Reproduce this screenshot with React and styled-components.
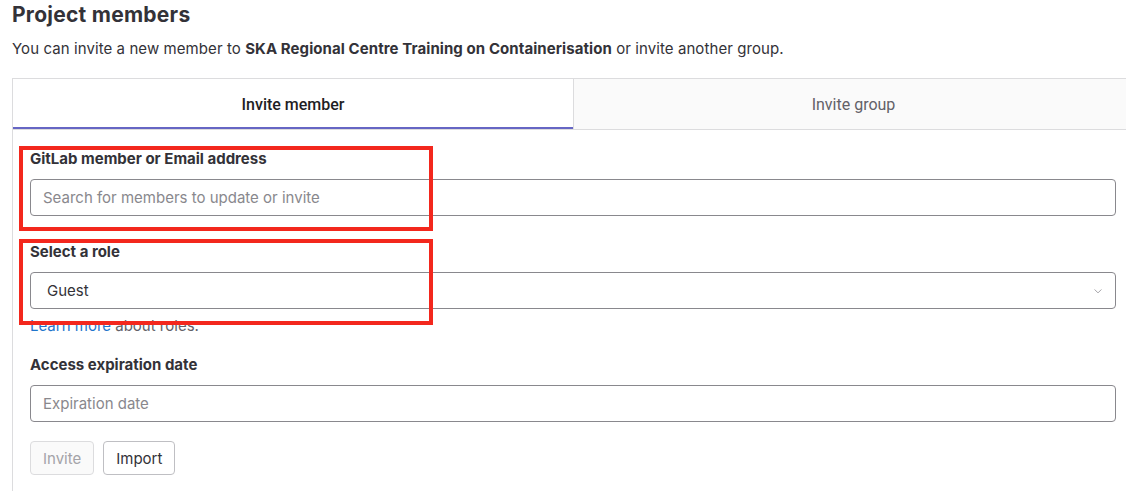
import React from 'react';
import styled, { createGlobalStyle } from 'styled-components';

const GlobalStyle = createGlobalStyle`
  body {
    margin: 0;
    background: #fff;
    color: #333238;
    font-family: Inter, "Noto Sans", sans-serif;
    overflow: hidden;
  }
`;

const Page = styled.div`
  padding: 0 0 0 12px;
  width: 1132px;
`;

const Title = styled.h1`
  margin: 0;
  padding-top: 2px;
  font-size: 21px;
  line-height: 26px;
  font-weight: 700;
  letter-spacing: 0.25px;
  color: #333238;
`;

const Intro = styled.p`
  margin: 11px 0 0;
  font-size: 15px;
  line-height: 20px;
  letter-spacing: 0.08px;
  color: #333238;
  strong {
    font-weight: 700;
  }
`;

const Panel = styled.div`
  margin-top: 19px;
  width: 1120px;
  border-left: 1px solid #dcdcde;
`;

const TabList = styled.div`
  display: grid;
  grid-template-columns: 560px 1fr;
  border-top: 1px solid #dcdcde;
  border-bottom: 1px solid #dcdcde;
`;

const Tab = styled.div`
  height: 50px;
  display: flex;
  align-items: center;
  justify-content: center;
  font-family: Roboto, "Noto Sans", sans-serif;
  font-size: 16px;
  font-weight: ${p => (p.$active ? 500 : 400)};
  color: ${p => (p.$active ? '#1f1e24' : '#626168')};
  background: ${p => (p.$active ? '#fff' : '#fafafa')};
  box-shadow: ${p => (p.$active ? 'inset 0 -2px 0 #6666c4' : 'none')};
  border-left: ${p => (p.$active ? 'none' : '1px solid #dcdcde')};
`;

const Body = styled.div`
  padding: 19px 17px 16px 17px;
`;

const Group = styled.div`
  position: relative;
  margin-bottom: ${p => p.$mb || 0}px;
`;

const Label = styled.label`
  display: block;
  font-size: 15px;
  line-height: 20px;
  font-weight: 700;
  color: #333238;
  margin-bottom: 10px;
`;

const Field = styled.div`
  position: relative;
  height: 37px;
  box-sizing: border-box;
  border: 1px solid #89888d;
  border-radius: 4px;
  display: flex;
  align-items: center;
  padding: 0 12px;
  font-size: 15px;
  color: ${p => (p.$placeholder ? '#89888d' : '#333238')};
  padding-left: ${p => (p.$select ? 16 : 12)}px;
`;

const Chevron = styled.svg`
  position: absolute;
  right: 12px;
  top: 13px;
`;

const Help = styled.div`
  margin-top: 7px;
  font-size: 15px;
  line-height: 20px;
  color: #626168;
  a {
    color: #1f75cb;
    text-decoration: none;
  }
`;

const Actions = styled.div`
  display: flex;
  gap: 9px;
`;

const Button = styled.button`
  height: 34px;
  box-sizing: border-box;
  padding: 0 12px;
  border-radius: 4px;
  font-family: Inter, "Noto Sans", sans-serif;
  font-size: 15px;
  border: 1px solid ${p => (p.disabled ? '#dcdcde' : '#bfbfc3')};
  background: ${p => (p.disabled ? '#fafafa' : '#fff')};
  color: ${p => (p.disabled ? '#a4a3a8' : '#333238')};
`;

const Highlight = styled.div`
  position: absolute;
  left: -11px;
  top: ${p => p.$top}px;
  width: 414px;
  height: ${p => p.$h}px;
  box-sizing: border-box;
  border: 4px solid #f3271d;
  pointer-events: none;
`;

export default function App() {
  return (
    <Page>
      <GlobalStyle />
      <Title>Project members</Title>
      <Intro>
        You can invite a new member to <strong>SKA Regional Centre Training on Containerisation</strong> or invite another group.
      </Intro>
      <Panel>
        <TabList>
          <Tab $active>Invite member</Tab>
          <Tab>Invite group</Tab>
        </TabList>
        <Body>
          <Group $mb={26}>
            <Label>GitLab member or Email address</Label>
            <Field $placeholder>Search for members to update or invite</Field>
            <Highlight $top={-3} $h={85} />
          </Group>
          <Group $mb={19}>
            <Label>Select a role</Label>
            <Field $select>
              Guest
              <Chevron width="10" height="10" viewBox="0 0 16 16">
                <path d="M3 6l5 5 5-5" fill="none" stroke="#a4a3a8" strokeWidth="1.6" strokeLinecap="round" strokeLinejoin="round" />
              </Chevron>
            </Field>
            <Help>
              <a href="#roles">Learn more</a> about roles.
            </Help>
            <Highlight $top={-3} $h={86} />
          </Group>
          <Group $mb={19}>
            <Label>Access expiration date</Label>
            <Field $placeholder>Expiration date</Field>
          </Group>
          <Actions>
            <Button disabled>Invite</Button>
            <Button>Import</Button>
          </Actions>
        </Body>
      </Panel>
    </Page>
  );
}
